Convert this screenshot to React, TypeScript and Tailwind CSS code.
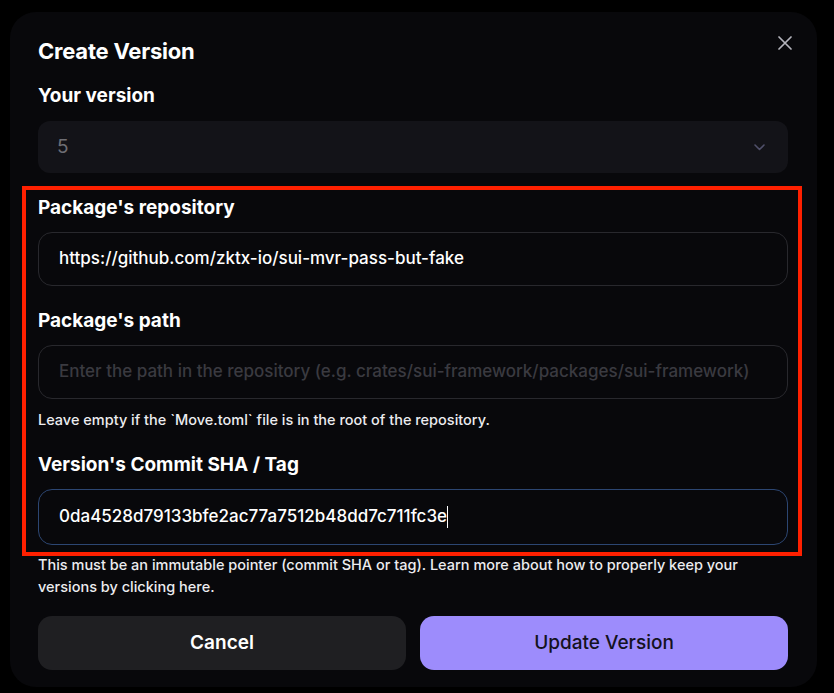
import React from "react";

const Label = ({ children }: { children: React.ReactNode }) => (
  <div className="text-[19px] leading-7 font-bold text-white">{children}</div>
);

const App = () => {
  return (
    <div className="min-h-[693px] w-[834px] bg-black pt-3 pl-[10px] font-['Inter',sans-serif]">
      <div className="relative w-[807px] rounded-[26px] bg-[#08080b] pt-[23px] pl-7 pr-[29px] pb-[17px]">
        {/* close */}
        <button className="absolute top-[24px] right-[25px] w-[14px] h-[14px] text-[#b4b4bc]">
          <svg width="14" height="14" viewBox="0 0 14 14" fill="none">
            <path d="M1 1L13 13M13 1L1 13" stroke="currentColor" strokeWidth="1.7" strokeLinecap="round" />
          </svg>
        </button>

        <h2 className="text-[22px] leading-8 font-bold tracking-[-0.01em] text-white">Create Version</h2>

        <div className="mt-[15px]">
          <Label>Your version</Label>
          <div className="mt-[11px] h-[52px] rounded-xl bg-[#131318] flex items-center justify-between pl-[19px] pr-[23px]">
            <span className="text-[19px] text-[#6e6e74]">5</span>
            <svg width="11" height="7" viewBox="0 0 11 7" fill="none">
              <path d="M1 1L5.5 5.5L10 1" stroke="#50506a" strokeWidth="1.6" strokeLinecap="round" strokeLinejoin="round" />
            </svg>
          </div>
        </div>

        {/* highlighted fields */}
        <div className="relative mt-[21px]">
          <div className="absolute -top-2 -left-4 -right-[14px] -bottom-[11px] border-4 border-[#ff2000] pointer-events-none"></div>

          <Label>Package's repository</Label>
          <div className="mt-[10px] h-[54px] rounded-[14px] border border-[#28282d] flex items-center px-5">
            <span className="text-[17px] font-medium text-white">
              https://github.com/zktx-io/sui-mvr-pass-but-fake
            </span>
          </div>

          <div className="mt-[21px]">
            <Label>Package's path</Label>
          </div>
          <div className="mt-[10px] h-[54px] rounded-[14px] border border-[#28282d] flex items-center px-5">
            <span className="text-[17px] font-medium text-[#3a3a40] whitespace-nowrap">
              Enter the path in the repository (e.g. crates/sui-framework/packages/sui-framework)
            </span>
          </div>
          <p className="mt-[11px] text-[14.5px] leading-5 font-medium text-[#ececef]">
            Leave empty if the `Move.toml` file is in the root of the repository.
          </p>

          <div className="mt-[21px]">
            <Label>Version's Commit SHA / Tag</Label>
          </div>
          <div className="mt-[10px] h-[56px] rounded-[14px] border border-[#2c4672] flex items-center px-5">
            <span className="text-[17px] font-medium text-white">
              0da4528d79133bfe2ac77a7512b48dd7c711fc3e
            </span>
            <span className="w-px h-[22px] bg-white"></span>
          </div>
        </div>

        <p className="mt-[9px] text-[14.5px] leading-[22px] font-medium text-[#ececef]">
          This must be an immutable pointer (commit SHA or tag). Learn more about how to properly keep your
          versions by clicking here.
        </p>

        <div className="mt-[18px] grid grid-cols-2 gap-[14px]">
          <button className="h-[54px] rounded-[14px] bg-[#1f1f22] text-[19px] font-semibold text-white">
            Cancel
          </button>
          <button className="h-[54px] rounded-[14px] bg-[#9d8cfc] text-[19px] font-medium text-[#141220]">
            Update Version
          </button>
        </div>
      </div>
    </div>
  );
};

export default App;
